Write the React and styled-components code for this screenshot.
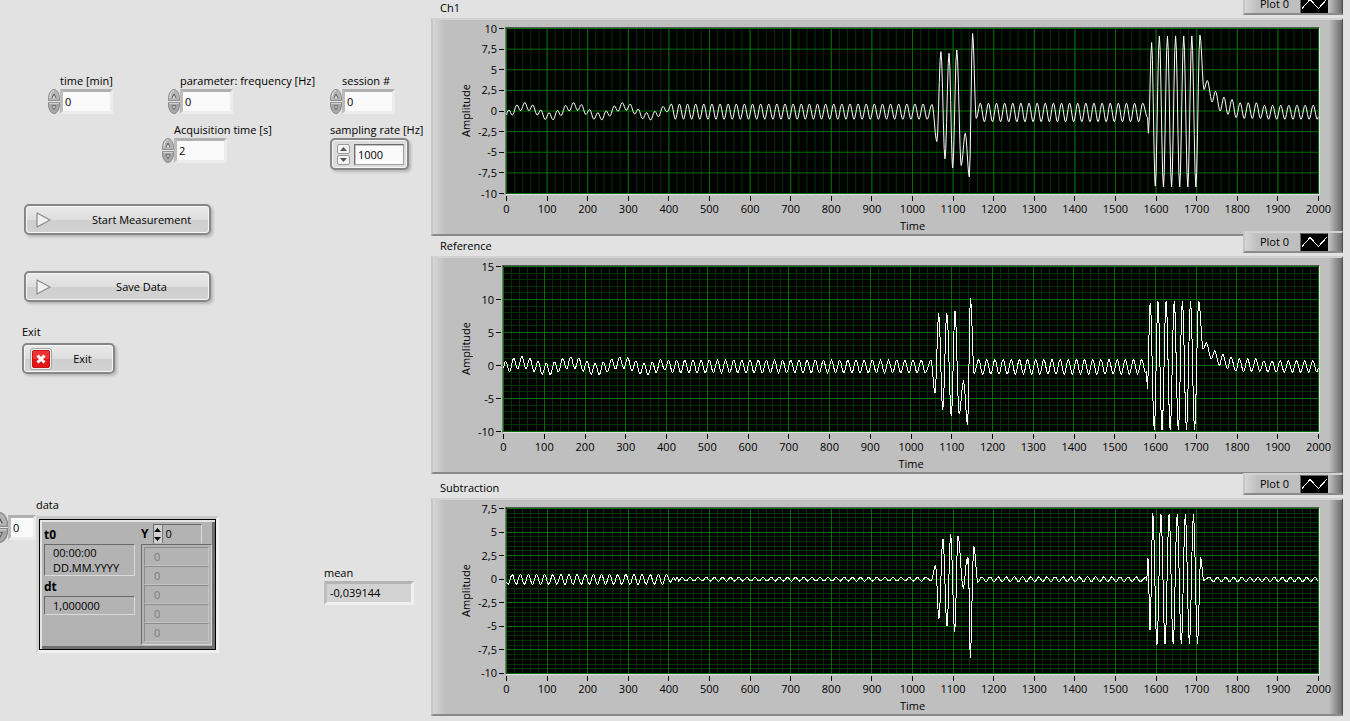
import React from "react";
import styled, { createGlobalStyle, css } from "styled-components";

const GlobalStyle = createGlobalStyle`
  *, *::before, *::after { box-sizing: border-box; }
  body {
    margin: 0;
    background: #e2e2e2;
    color: #000;
    font: 11px/16px "Open Sans", "Noto Sans", sans-serif;
    overflow-x: hidden;
  }
  input, button { font: inherit; color: inherit; }
`;

/* ---------- page ---------- */

const Page = styled.main`
  display: flex;
  align-items: flex-start;
`;

const ControlPane = styled.section`
  flex: 0 0 431px;
  padding-top: 73px;
`;

const ChartPane = styled.section`
  flex: 1;
  min-width: 0;
  padding-right: 7px;
`;

/* ---------- numeric controls ---------- */

const ControlColumns = styled.div`
  display: grid;
  grid-template-columns: 114px 168px 1fr;
  padding-left: 48px;
`;

const ControlColumn = styled.div`
  display: flex;
  flex-direction: column;
  gap: 8px;
`;

const Field = styled.div`
  padding-left: ${(p) => p.$indent || 0}px;
`;

const FieldLabel = styled.label`
  display: block;
  height: 16px;
  padding-left: ${(p) => p.$indent || 0}px;
  white-space: nowrap;
`;

const NumberRow = styled.div`
  display: flex;
  align-items: center;
`;

const NumberInput = styled.input`
  width: ${(p) => p.$width || 53}px;
  height: 25px;
  padding: 0 2px;
  border: 3px solid;
  border-color: #b0b0b0 #ececec #ececec #bcbcbc;
  border-radius: 0;
  background: #fafafa;
  outline: none;
`;

const SpinnerStack = styled.span`
  display: flex;
  flex-direction: column;
  gap: 1px;
`;

const SpinnerButton = styled.button`
  display: block;
  padding: 0;
  border: 0;
  background: none;
  line-height: 0;
`;

function OvalSpinner({ name, width = 12, half = 12 }) {
  return (
    <SpinnerStack>
      <SpinnerButton type="button" aria-label={`Increase ${name}`}>
        <svg width={width} height={half} viewBox="0 0 12 13" preserveAspectRatio="none">
          <path d="M0.5 12.5V9C1 4 3.500 0.500 6 0.500S11 4 11.500 9v3.500z" fill="#b4b4b4" stroke="#8c8c8c" />
          <path d="M2 9.500C2.200 5 4 2 6 2" fill="none" stroke="#e4e4e4" />
          <path d="M4 10 6 5.500 8 10" fill="#e4e4e4" stroke="#555" />
        </svg>
      </SpinnerButton>
      <SpinnerButton type="button" aria-label={`Decrease ${name}`}>
        <svg width={width} height={half} viewBox="0 0 12 13" preserveAspectRatio="none">
          <path d="M0.5 0.5V4C1 9 3.500 12.500 6 12.500S11 9 11.500 4V0.500z" fill="#a8a8a8" stroke="#868686" />
          <path d="M1 1.500H11" stroke="#d8d8d8" />
          <path d="M8 4 6 8.500 4 4z" fill="#e0e0e0" stroke="#666" />
        </svg>
      </SpinnerButton>
    </SpinnerStack>
  );
}

function NumberControl({ id, label, value, indent }) {
  return (
    <Field $indent={indent}>
      <FieldLabel htmlFor={id} $indent={12}>{label}</FieldLabel>
      <NumberRow>
        <OvalSpinner name={label} />
        <NumberInput id={id} defaultValue={value} />
      </NumberRow>
    </Field>
  );
}

const raised = css`
  border: 2px solid #868686;
  border-radius: 5px;
  background: linear-gradient(#e9e9e9, #dedede 50%, #cfcfcf 52%, #d2d2d2);
  box-shadow: inset 0 0 0 1px #f6f6f6, 2px 2px 3px rgba(0, 0, 0, 0.2);
`;

const RateBox = styled.div`
  ${raised}
  display: flex;
  align-items: center;
  gap: 4px;
  width: 79px;
  height: 32px;
  padding-left: 5px;
  background: #dcdcdc;
`;

const RateStep = styled.button`
  display: flex;
  align-items: center;
  justify-content: center;
  width: 13px;
  height: 10px;
  padding: 0;
  border: 1px solid #999;
  border-radius: 2px;
  background: #f4f4f4;
  color: #555;
`;

const RateInput = styled.input`
  width: 50px;
  height: 21px;
  padding: 0 3px;
  border: 1px solid;
  border-color: #6c6c6c #a0a0a0 #a0a0a0 #6c6c6c;
  box-shadow: inset 1px 1px 0 #c4c4c4;
  background: #fafafa;
  outline: none;
`;

/* ---------- command buttons ---------- */

const CommandStack = styled.div`
  display: flex;
  flex-direction: column;
  align-items: flex-start;
  gap: 36px;
  padding: 34px 0 0 24px;
`;

const CommandButton = styled.button`
  ${raised}
  display: flex;
  align-items: center;
  width: ${(p) => p.$width}px;
  height: 31px;
  padding: 0;
`;

const CommandIcon = styled.span`
  display: flex;
  width: ${(p) => p.$width}px;
  padding-left: ${(p) => p.$indent}px;
`;

const CommandText = styled.span`
  flex: 1;
  text-align: center;
`;

const ExitBlock = styled.div`
  padding: 22px 0 0 22px;
`;

const ExitCaption = styled.div`
  height: 19px;
`;

function PlayIcon() {
  return (
    <svg width="15" height="16" viewBox="0 0 15 16">
      <path d="M1 1v14L14 8z" fill="#f0f0f0" stroke="#8a8a8a" strokeWidth="1.200" strokeLinejoin="round" />
    </svg>
  );
}

function ExitIcon() {
  return (
    <svg width="22" height="22" viewBox="0 0 22 22">
      <rect x="0.500" y="0.500" width="21" height="21" rx="2.500" fill="#eee" stroke="#a8a8a8" />
      <rect x="2.500" y="2.500" width="17" height="17" rx="1.500" fill="#e01515" stroke="#c81414" />
      <rect x="3" y="3" width="16" height="8" fill="#ee3434" />
      <path d="M7.500 7.500l7 7M14.500 7.500l-7 7" stroke="#fff" strokeWidth="3" />
    </svg>
  );
}

/* ---------- waveform cluster ---------- */

const BottomRow = styled.div`
  display: flex;
  align-items: flex-start;
  padding-top: 123px;
`;

const IndexControl = styled.div`
  display: flex;
  align-items: center;
  width: 36px;
  margin-top: 15px;
  overflow: hidden;
`;

const IndexSpinner = styled.div`
  flex: none;
  margin-left: -9px;
`;

const ClusterBlock = styled.div`
  width: 288px;
`;

const ClusterCaption = styled.div`
  height: 19px;
`;

const ClusterFrame = styled.div`
  width: 183px;
  border: 3px solid;
  border-color: #c9c9c9 #f0f0f0 #f0f0f0 #d2d2d2;
`;

const ClusterBody = styled.div`
  display: flex;
  gap: 6px;
  height: 131px;
  padding: 2px 2px 2px 4px;
  border: 1px solid #000;
  box-shadow: inset 2px 2px 0 #e4e4e4, inset -3px -3px 0 #6e6e6e;
  background: #b3b3b3;
`;

const sunken = css`
  border: 1px solid;
  border-color: #6a6a6a #dadada #dadada #6a6a6a;
`;

const TimingColumn = styled.div`
  width: 91px;
  padding-top: 5px;
`;

const BoldName = styled.div`
  height: 17px;
  font-weight: 700;
  font-size: 12px;
`;

const Readout = styled.output`
  ${sunken}
  display: block;
  margin-bottom: 3px;
  padding: 0 0 0 8px;
  line-height: ${(p) => p.$line || 17}px;
  white-space: nowrap;
`;

const ArrayColumn = styled.div`
  width: 71px;
`;

const ArrayHeader = styled.div`
  display: flex;
  align-items: center;
  height: 22px;
  padding-top: 2px;
  font-size: 12px;
  font-weight: 700;
`;

const ArrayIndex = styled.div`
  ${sunken}
  display: flex;
  align-items: center;
  width: 49px;
  height: 20px;
  margin-left: 4px;
  border-bottom-color: transparent;
  font-size: 11px;
  font-weight: 400;
`;

const IndexInput = styled.input`
  width: 32px;
  padding: 0 3px;
  border: 0;
  background: none;
  outline: none;
`;

const MiniStack = styled.div`
  display: flex;
  flex-direction: column;
`;

const MiniStep = styled.button`
  display: flex;
  align-items: center;
  justify-content: center;
  width: 9px;
  height: 9px;
  padding: 0;
  border: 0;
  border-right: 1px solid #777;
  background: #d0d0d0;
`;

const ArrayList = styled.ol`
  ${sunken}
  margin: 0;
  padding: 2px;
  list-style: none;
`;

const ArrayCell = styled.li`
  height: 19px;
  padding-left: 9px;
  border: 1px solid;
  border-color: #8c8c8c #c4c4c4 #c4c4c4 #8c8c8c;
  line-height: 17px;
  color: #7c7c7c;
`;

const MeanBlock = styled.div`
  padding-top: 68px;
`;

const MeanValue = styled.output`
  display: block;
  width: 90px;
  height: 24px;
  padding-left: 3px;
  border: 3px solid;
  border-color: #b4b4b4 #f0f0f0 #f0f0f0 #bebebe;
  background: #d2d2d2;
  line-height: 18px;
`;

function Arrow({ down }) {
  return (
    <svg width="7" height="4" viewBox="0 0 7 4">
      <path d={down ? "M0 0h7L3.500 4z" : "M0 4h7L3.500 0z"} fill="currentColor" />
    </svg>
  );
}

/* ---------- charts ---------- */

const bevelStrip = css`
  border-left: 2px solid #c6c6c6;
  border-top: 2px solid #d2d2d2;
  border-right: 1px solid #4c4c4c;
  border-bottom: 2px solid #8a8a8a;
  background:
    linear-gradient(90deg, #d6d6d6, #bfbfbf) left / 12px 100% no-repeat,
    linear-gradient(90deg, #bfbfbf, #6c6c6c) right / 13px 100% no-repeat,
    #bfbfbf;
`;

const ChartHeader = styled.header`
  position: relative;
  display: flex;
  align-items: flex-end;
  height: ${(p) => p.$height}px;
  padding: 0 0 2px 9px;
`;

const Legend = styled.div`
  ${bevelStrip}
  position: absolute;
  right: 0;
  bottom: 3px;
  display: flex;
  align-items: center;
  justify-content: flex-end;
  gap: 11px;
  width: 100px;
  height: 22px;
  padding-right: 14px;
`;

const ChartPanel = styled.figure`
  ${bevelStrip}
  display: grid;
  grid-template-columns: 16px ${(p) => p.$axis}px 1fr;
  height: 218px;
  margin: 0;
  padding: 7px 22px 0 25px;
  align-content: start;
`;

const AxisName = styled.div`
  text-align: center;
  ${(p) => p.$vertical && css`
    writing-mode: vertical-rl;
    transform: rotate(180deg);
  `}
`;

const YAxis = styled.div`
  display: flex;
  flex-direction: column;
  justify-content: space-between;
  height: 166px;
  margin-top: 1px;
  padding-right: 1px;
`;

const YTick = styled.div`
  display: flex;
  align-items: center;
  justify-content: flex-end;
  gap: 2px;
  height: 1px;
  &::after {
    content: "";
    width: 5px;
    height: 1px;
    background: #000;
  }
`;

const PlotFrame = styled.div`
  height: 168px;
  border: 1px solid;
  border-color: #555 #e0e0e0 #e0e0e0 #777;
  background: #000;
`;

const PlotSvg = styled.svg`
  display: block;
  width: 100%;
  height: 166px;
`;

const XAxis = styled.div`
  grid-column: 3;
  display: flex;
  justify-content: space-between;
  height: 23px;
  margin: 0 1px;
  padding-top: 1px;
`;

const XTick = styled.div`
  display: flex;
  flex-direction: column;
  align-items: center;
  width: 1px;
  &::before {
    content: "";
    flex: none;
    width: 1px;
    height: 5px;
    background: #000;
  }
`;

const XName = styled(AxisName)`
  grid-column: 3;
`;

/* Alternating crests and troughs, one pair every 20 samples. */
function wave(from, to, high, low) {
  const points = [];
  for (let x = from; x <= to; x += 20) {
    points.push([x, high]);
    if (x + 10 <= to) points.push([x + 10, low]);
  }
  return points;
}

/* Joins turning points by half cosine arcs. */
function smooth(points) {
  const out = [];
  for (let i = 0; i < points.length - 1; i++) {
    const [x0, y0] = points[i];
    const [x1, y1] = points[i + 1];
    for (let x = x0; x < x1; x += 2) {
      const t = (x - x0) / (x1 - x0);
      out.push([x, y0 + ((y1 - y0) * (1 - Math.cos(Math.PI * t))) / 2]);
    }
  }
  out.push(points[points.length - 1]);
  return out;
}

/* Fast oscillation riding on a slow swell, for the first 400 samples. */
function swell(slow, fast) {
  const out = [];
  for (let x = 0; x < 396; x += 2) {
    out.push([
      x,
      slow * Math.cos((2 * Math.PI * (x - 45)) / 122) + fast * Math.cos((2 * Math.PI * (x - 5)) / 20) - 0.05,
    ]);
  }
  return out;
}

const ch1 = [
  ...swell(0.62, 0.45),
  ...smooth([
    [396, -0.1], ...wave(406, 1040, 0.85, -1), [1048, 0.8],
    [1060, -3.7], [1070, 7.2], [1080, -5.8], [1090, 7], [1099, -6.9], [1109, 7.4],
    [1120, -6.6], [1130, -2.7], [1140, -8], [1148, 9.4], [1157, -0.9],
    ...wave(1167, 1570, 0.95, -1.3), [1579, -0.8], [1581, -2.7], [1589, 8.3], [1598, -9.1],
    ...wave(1608, 1700, 9.1, -9.2), [1708, 9.2], [1718, 2.6], [1726, 3.7], [1738, 1.1],
    [1746, 2.4], [1758, 0], [1767, 1.7], [1777, -0.4], [1787, 1.4], [1797, -0.8],
    ...wave(1807, 1860, 1, -0.9), ...wave(1867, 1998, 0.7, -1), [2000, -0.7],
  ]),
];

const reference = [
  ...swell(0.5, 0.88),
  ...smooth([
    [396, -0.7], ...wave(405, 1040, 0.8, -1.1), [1049, 0.8],
    [1059, -4.2], [1068, 7.9], [1078, -6.7], [1088, 7.9], [1099, -7.6], [1108, 8.3],
    [1118, -7.4], [1129, -2.4], [1139, -9], [1146, 10.2], [1155, -1.2],
    ...wave(1166, 1566, 0.9, -1.3), [1576, -1.1], [1578, -0.9], [1580, -3.6], [1587, 9.4], [1597, -9.8],
    ...wave(1606, 1700, 9.8, -9.8), [1706, 9.8], [1717, 2.5], [1725, 3.4], [1737, 1],
    [1745, 2.2], [1757, 0], [1765, 1.7], [1777, -0.5], [1785, 1.3], [1797, -0.8],
    ...wave(1806, 1856, 1, -0.9), ...wave(1866, 1998, 0.7, -1), [2000, -0.4],
  ]),
];

const subtraction = smooth([
  [0, -0.3], [4, -0.55], ...wave(14, 400, 0.5, -0.55), [404, -0.3], [412, 0.2], [416, -0.1], [420, 0.25], [424, -0.2],
  ...wave(432, 1034, 0.2, -0.2), [1046, -0.15],
  [1057, 1.5], [1065, -4.2], [1075, 4.3], [1085, -5], [1094, 4.8], [1104, -5.6], [1112, 4.6],
  [1125, -0.9], [1135, 2.3], [1137, 1.5], [1138, 2.3], [1142, -8.4], [1151, 3.5], [1161, -0.3],
  ...wave(1171, 1566, 0.25, -0.25), [1575, 0.2], [1577, -0.2], [1580, 2.2], [1585, -5.4], [1592, 7], [1602, -7],
  ...wave(1612, 1702, 6.9, -6.9), [1710, 2.3], [1717, -0.1],
  ...wave(1731, 1998, 0.2, -0.25), [2000, -0.2],
]);

const X_TICKS = Array.from({ length: 21 }, (_, i) => i * 100);

function range(from, to, step) {
  const out = [];
  for (let v = from; v <= to; v += step) out.push(v);
  return out;
}

function lines(xs, ys, min, max) {
  return xs.map((x) => `M${x} ${-max}V${-min}`).join("") + ys.map((y) => `M0 ${-y}H2000`).join("");
}

function Plot({ title, data, min, max, step, minor }) {
  const hx = 2000 / 812 / 2;
  const hy = (max - min) / 165 / 2;
  const box = `${-hx} ${-max - hy} ${2000 + 2 * hx} ${max - min + 2 * hy}`;
  const stroke = { fill: "none", vectorEffect: "non-scaling-stroke", shapeRendering: "crispEdges" };
  return (
    <PlotSvg viewBox={box} preserveAspectRatio="none" role="img" aria-label={`${title} waveform`}>
      <path d={lines(range(0, 2000, 20), minor ? range(min, max, minor) : [], min, max)} stroke="#003200" {...stroke} />
      <path d={lines(X_TICKS, range(min, max, step), min, max)} stroke="#006e00" {...stroke} />
      <polyline points={data.map(([x, y]) => `${x},${(-y).toFixed(2)}`).join(" ")} stroke="#fff" {...stroke} />
    </PlotSvg>
  );
}

function Chart({ title, header, axis, ...plot }) {
  const yTicks = range(plot.min, plot.max, plot.step).reverse();
  return (
    <article>
      <ChartHeader $height={header}>
        <span>{title}</span>
        <Legend>
          Plot 0
          <svg width="28" height="18" viewBox="0 0 28 18">
            <rect width="28" height="18" fill="#000" />
            <path d="M0.500 18V0.500H28" fill="none" stroke="#666" />
            <path d="M2 13.500 10 4.500 18.500 13.500 27 4" fill="none" stroke="#fff" shapeRendering="crispEdges" />
          </svg>
        </Legend>
      </ChartHeader>
      <ChartPanel $axis={axis}>
        <AxisName $vertical>Amplitude</AxisName>
        <YAxis>
          {yTicks.map((v) => (
            <YTick key={v}>{String(v).replace(".", ",")}</YTick>
          ))}
        </YAxis>
        <PlotFrame>
          <Plot title={title} {...plot} />
        </PlotFrame>
        <XAxis>
          {X_TICKS.map((v) => (
            <XTick key={v}>{v}</XTick>
          ))}
        </XAxis>
        <XName>Time</XName>
      </ChartPanel>
    </article>
  );
}

export default function App() {
  return (
    <>
      <GlobalStyle />
      <Page>
        <ControlPane>
          <ControlColumns>
            <ControlColumn>
              <NumberControl id="time" label="time [min]" value="0" />
            </ControlColumn>
            <ControlColumn>
              <NumberControl id="frequency" label="parameter: frequency [Hz]" value="0" indent={6} />
              <NumberControl id="acquisition" label="Acquisition time [s]" value="2" />
            </ControlColumn>
            <ControlColumn>
              <NumberControl id="session" label="session #" value="0" />
              <Field>
                <FieldLabel htmlFor="rate">sampling rate [Hz]</FieldLabel>
                <RateBox>
                  <SpinnerStack>
                    <RateStep type="button" aria-label="Increase sampling rate"><Arrow /></RateStep>
                    <RateStep type="button" aria-label="Decrease sampling rate"><Arrow down /></RateStep>
                  </SpinnerStack>
                  <RateInput id="rate" defaultValue="1000" />
                </RateBox>
              </Field>
            </ControlColumn>
          </ControlColumns>

          <CommandStack>
            <CommandButton type="button" $width={187}>
              <CommandIcon $width={48} $indent={10}><PlayIcon /></CommandIcon>
              <CommandText>Start Measurement</CommandText>
            </CommandButton>
            <CommandButton type="button" $width={187}>
              <CommandIcon $width={48} $indent={10}><PlayIcon /></CommandIcon>
              <CommandText>Save Data</CommandText>
            </CommandButton>
          </CommandStack>

          <ExitBlock>
            <ExitCaption>Exit</ExitCaption>
            <CommandButton type="button" $width={93}>
              <CommandIcon $width={28} $indent={6}><ExitIcon /></CommandIcon>
              <CommandText>Exit</CommandText>
            </CommandButton>
          </ExitBlock>

          <BottomRow>
            <IndexControl>
              <IndexSpinner><OvalSpinner name="data index" width={17} half={15} /></IndexSpinner>
              <NumberInput aria-label="data index" $width={28} defaultValue="0" />
            </IndexControl>
            <ClusterBlock>
              <ClusterCaption>data</ClusterCaption>
              <ClusterFrame>
                <ClusterBody>
                  <TimingColumn>
                    <BoldName>t0</BoldName>
                    <Readout $line={15}>00:00:00<br />DD.MM.YYYY</Readout>
                    <BoldName>dt</BoldName>
                    <Readout>1,000000</Readout>
                  </TimingColumn>
                  <ArrayColumn>
                    <ArrayHeader>
                      Y
                      <ArrayIndex>
                        <MiniStack>
                          <MiniStep type="button" aria-label="Next element"><Arrow /></MiniStep>
                          <MiniStep type="button" aria-label="Previous element"><Arrow down /></MiniStep>
                        </MiniStack>
                        <IndexInput aria-label="Y index" defaultValue="0" />
                      </ArrayIndex>
                    </ArrayHeader>
                    <ArrayList>
                      {[0, 1, 2, 3, 4].map((i) => (
                        <ArrayCell key={i}>0</ArrayCell>
                      ))}
                    </ArrayList>
                  </ArrayColumn>
                </ClusterBody>
              </ClusterFrame>
            </ClusterBlock>
            <MeanBlock>
              <div>mean</div>
              <MeanValue>-0,039144</MeanValue>
            </MeanBlock>
          </BottomRow>
        </ControlPane>

        <ChartPane>
          <Chart title="Ch1" header={18} axis={31} data={ch1} min={-10} max={10} step={2.5} />
          <Chart title="Reference" header={20} axis={28} data={reference} min={-10} max={15} step={5} minor={1} />
          <Chart title="Subtraction" header={24} axis={31} data={subtraction} min={-10} max={7.5} step={2.5} minor={0.5} />
        </ChartPane>
      </Page>
    </>
  );
}
